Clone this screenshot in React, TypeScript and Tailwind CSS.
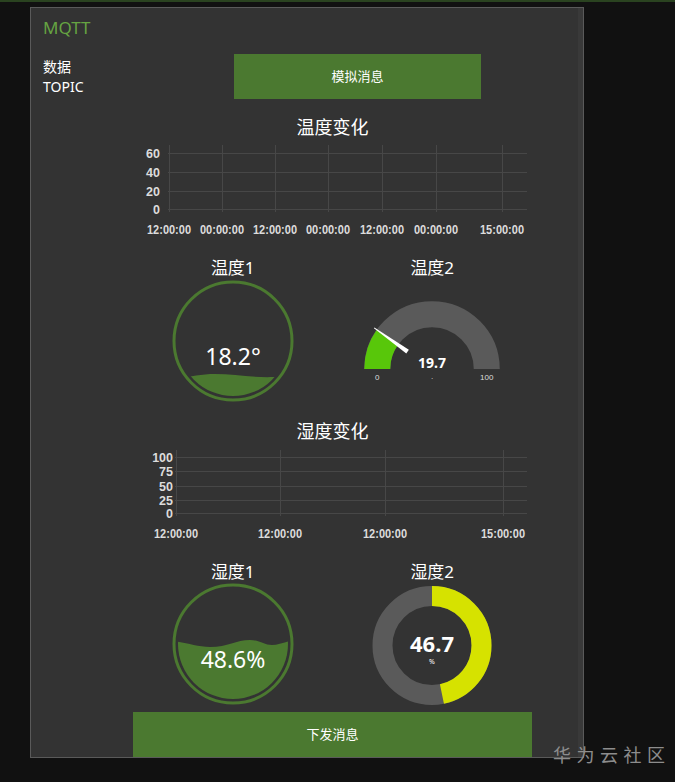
import React from "react";

// Node-RED style MQTT dashboard group (dark theme)

const GREEN = "#4b7930";

type Tick = { label: string; y: number };

interface ChartProps {
  ticks: Tick[];
  labelX: number;
  x0: number;
  vLines: number[];
  xLabels: string[];
  vTop: number;
}

function LineChart({ ticks, labelX, x0, vLines, xLabels, vTop }: ChartProps) {
  return (
    <svg width={399} height={101} className="block">
      {ticks.map((t) => (
        <line key={"h" + t.label} x1={x0} x2={394} y1={t.y + 0.5} y2={t.y + 0.5} stroke="#474747" />
      ))}
      {vLines.map((x, i) => (
        <line key={"v" + i} x1={x + 0.5} x2={x + 0.5} y1={vTop} y2={73} stroke="#474747" />
      ))}
      {ticks.map((t) => (
        <text
          key={"t" + t.label}
          x={labelX}
          y={t.y + 4.5}
          textAnchor="end"
          className="fill-[#dcdcdc] text-[12.5px] font-bold font-['Liberation_Sans',Arial,sans-serif]"
        >
          {t.label}
        </text>
      ))}
      {vLines.map((x, i) => (
        <text
          key={"x" + i}
          x={x - 22}
          y={95}
          textLength={44}
          lengthAdjust="spacingAndGlyphs"
          className="fill-[#dcdcdc] text-[13px] font-bold font-['Liberation_Sans',Arial,sans-serif]"
        >
          {xLabels[i]}
        </text>
      ))}
    </svg>
  );
}

interface LiquidProps {
  id: string;
  cy: number;
  wave: string;
  text: string;
  baseline: number;
}

function Liquid({ id, cy, wave, text, baseline }: LiquidProps) {
  return (
    <svg width={130} height={126} className="block">
      <defs>
        <clipPath id={id}>
          <circle cx={65} cy={cy} r={55} />
        </clipPath>
      </defs>
      <circle cx={65} cy={cy} r={59} fill="none" stroke={GREEN} strokeWidth={3} />
      <path d={wave} fill={GREEN} clipPath={`url(#${id})`} />
      <text x={65} y={baseline} textAnchor="middle" className="fill-white text-[23px] font-['Noto_Sans',sans-serif]">
        {text}
      </text>
    </svg>
  );
}

function HalfGauge({ value }: { value: number }) {
  const cx = 75;
  const cy = 90;
  const R = 54.75;
  const th = (value / 100) * Math.PI;
  const ex = cx - R * Math.cos(th);
  const ey = cy - R * Math.sin(th);
  const ux = -Math.cos(th);
  const uy = -Math.sin(th);
  const px = -uy;
  const py = ux;
  const r1 = 30;
  const r2 = 71;
  const needle = [
    [cx + ux * r1 + px * 2.2, cy + uy * r1 + py * 2.2],
    [cx + ux * r2 + px * 0.4, cy + uy * r2 + py * 0.4],
    [cx + ux * r2 - px * 0.4, cy + uy * r2 - py * 0.4],
    [cx + ux * r1 - px * 2.2, cy + uy * r1 - py * 2.2],
  ]
    .map((p) => p.join(","))
    .join(" ");

  return (
    <svg width={150} height={126} className="block">
      <path d={`M ${cx - R} ${cy} A ${R} ${R} 0 0 1 ${cx + R} ${cy}`} fill="none" stroke="#5a5a5a" strokeWidth={26} />
      <path d={`M ${cx - R} ${cy} A ${R} ${R} 0 0 1 ${ex} ${ey}`} fill="none" stroke="#58c70a" strokeWidth={26} />
      <polygon points={needle} fill="#ffffff" />
      <text x={cx} y={88.5} textAnchor="middle" className="fill-white text-[14px] font-bold font-['Noto_Sans',sans-serif]">
        {value.toFixed(1)}
      </text>
      <text x={cx - R} y={101} textAnchor="middle" className="fill-[#dddddd] text-[8px] font-['Liberation_Sans',Arial,sans-serif]">
        0
      </text>
      <text x={cx} y={100} textAnchor="middle" className="fill-[#dddddd] text-[8px] font-['Liberation_Sans',Arial,sans-serif]">
        .
      </text>
      <text x={cx + R} y={101} textAnchor="middle" className="fill-[#dddddd] text-[8px] font-['Liberation_Sans',Arial,sans-serif]">
        100
      </text>
    </svg>
  );
}

function Donut({ value }: { value: number }) {
  const r = 49.5;
  const c = 2 * Math.PI * r;
  return (
    <svg width={130} height={126} className="block">
      <circle cx={65} cy={62.5} r={r} fill="none" stroke="#5a5a5a" strokeWidth={20} />
      <circle
        cx={65}
        cy={62.5}
        r={r}
        fill="none"
        stroke="#d6e200"
        strokeWidth={20}
        strokeDasharray={`${(value / 100) * c} ${c}`}
        transform="rotate(-90 65 62.5)"
      />
      <text x={65} y={68.7} textAnchor="middle" className="fill-white text-[22px] font-bold font-['Noto_Sans',sans-serif]">
        {value.toFixed(1)}
      </text>
      <text x={65} y={80.5} textAnchor="middle" className="fill-white text-[7px] font-['Noto_Sans',sans-serif]">
        %
      </text>
    </svg>
  );
}

export default function App() {
  return (
    <div className="relative min-h-screen bg-[#111111] font-['Noto_Sans','Noto_Sans_CJK_SC',sans-serif]">
      <div className="h-[2px] bg-[#2a4320]" />
      <div className="ml-[30px] mt-[5px] flex h-[751px] w-[554px] overflow-hidden border border-[#5a5a5a] bg-[#333333]">
        <div className="flex-1 pl-[12px]">
          {/* group header */}
          <div className="pt-[8px] text-[17px] leading-[24px] text-[#66a442]">MQTT</div>

          {/* topic + simulate */}
          <div className="mt-[14px] flex items-start">
            <div className="w-[191px] pt-[3px] text-[14px] leading-[20px] text-white">
              <div>数据</div>
              <div>TOPIC</div>
            </div>
            <button
              type="button"
              className="flex h-[45px] w-[247px] items-center justify-center bg-[#4b7930] text-[13px] text-white"
            >
              模拟消息
            </button>
          </div>

          {/* widgets */}
          <div className="ml-[90px] flex w-[399px] flex-col">
            <div className="mt-[16px] h-[24px] text-center text-[18px] leading-[24px] text-white">温度变化</div>
            <LineChart
              ticks={[
                { label: "60", y: 14 },
                { label: "40", y: 33 },
                { label: "20", y: 52 },
                { label: "0", y: 70 },
              ]}
              labelX={27}
              x0={35}
              vLines={[36, 89, 142, 195, 249, 303, 369]}
              xLabels={["12:00:00", "00:00:00", "12:00:00", "00:00:00", "12:00:00", "00:00:00", "15:00:00"]}
              vTop={6}
            />

            <div className="mt-[17px] grid grid-cols-2">
              <div className="flex flex-col items-center">
                <div className="h-[22px] text-[17px] leading-[22px] text-white">温度1</div>
                <Liquid
                  id="liq1"
                  cy={62}
                  baseline={86}
                  text="18.2°"
                  wave="M 0 100 C 18 99, 30 95, 47 95 C 66 95, 86 99, 106 98 C 116 97.5, 124 97, 130 97 L 130 126 L 0 126 Z"
                />
              </div>
              <div className="flex flex-col items-center">
                <div className="h-[22px] text-[17px] leading-[22px] text-white">温度2</div>
                <HalfGauge value={19.7} />
              </div>
            </div>

            <div className="mt-[14px] h-[24px] text-center text-[18px] leading-[24px] text-white">湿度变化</div>
            <LineChart
              ticks={[
                { label: "100", y: 14 },
                { label: "75", y: 28 },
                { label: "50", y: 43 },
                { label: "25", y: 57 },
                { label: "0", y: 70 },
              ]}
              labelX={40}
              x0={42}
              vLines={[43, 147, 252, 370]}
              xLabels={["12:00:00", "12:00:00", "12:00:00", "15:00:00"]}
              vTop={7}
            />

            <div className="mt-[17px] grid grid-cols-2">
              <div className="flex flex-col items-center">
                <div className="h-[22px] text-[17px] leading-[22px] text-white">湿度1</div>
                <Liquid
                  id="liq2"
                  cy={61}
                  baseline={85}
                  text="48.6%"
                  wave="M 0 58 C 15 58, 27 64, 42 64 C 60 64, 68 57, 82 57 C 92 57, 96 62, 104 62 C 112 62, 120 57, 130 57 L 130 126 L 0 126 Z"
                />
              </div>
              <div className="flex flex-col items-center">
                <div className="h-[22px] text-[17px] leading-[22px] text-white">湿度2</div>
                <Donut value={46.7} />
              </div>
            </div>

            <button
              type="button"
              className="mt-[3px] flex h-[45px] w-[399px] shrink-0 items-center justify-center bg-[#4b7930] text-[13px] text-white"
            >
              下发消息
            </button>
          </div>
        </div>
        <div className="w-[5px] bg-[#393939]" />
      </div>

      {/* watermark */}
      <div className="absolute left-[553px] top-[746px] text-[18px] leading-[18px] tracking-[5.5px] text-[#8d8d8d]">
        华为云社区
      </div>
    </div>
  );
}
